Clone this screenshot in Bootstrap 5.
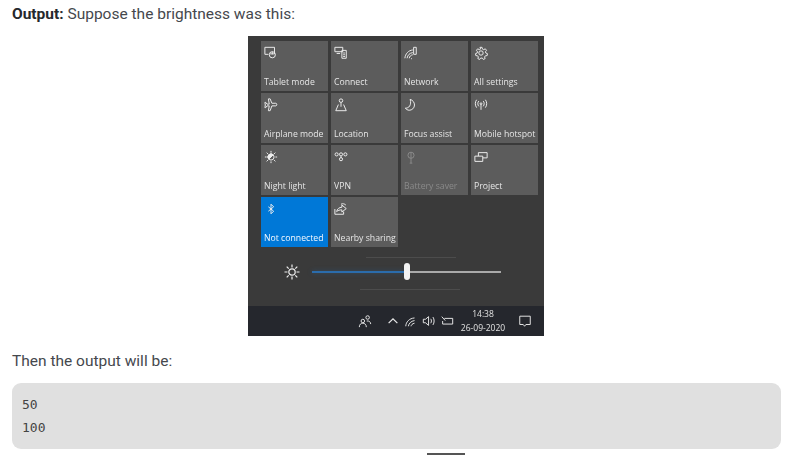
<!DOCTYPE html>
<html lang="en">
<head>
<meta charset="UTF-8">
<meta name="viewport" content="width=device-width, initial-scale=1.0">
<title>Output</title>
<link href="https://cdn.jsdelivr.net/npm/bootstrap@5.3.0/dist/css/bootstrap.min.css" rel="stylesheet">
<style>
body { font-family: Roboto, "Liberation Sans", sans-serif; font-size: 15.5px; color: #45484d; overflow: hidden; }
.page-wrap { padding: 5px 4px 0 12px; }
.out-text { line-height: 18px; margin: 0; }
.out-text b { color: #25282c; }
.shot { width: 296px; height: 300px; margin: 13px 0 16px 236px; background: #3a3a3a; filter: blur(.35px); }
.tile-grid { display: grid; grid-template-columns: repeat(4, 67px); grid-auto-rows: 50px; gap: 2px 3px; padding: 5px 0 0 13px; height: 211px; }
.tile { background: #5c5c5c; color: #e6e6e6; font-family: "Open Sans", sans-serif; font-size: 8.7px; line-height: 12px; padding: 5px 0 3px 3px; white-space: nowrap; }
.tile svg { width: 14px; height: 14px; fill: none; stroke: #eee; stroke-width: 1.1; display: block; }
.tile.on { background: #0078d7; color: #f2f8ff; }
.tile.off { color: #8a8a8a; }
.tile.off svg { stroke: #8a8a8a; }
.bright-row { height: 59px; position: relative; padding: 0 0 10px 36px; }
.bright-row > svg { width: 16px; height: 16px; fill: none; stroke: #eee; stroke-width: 1.2; margin-right: 12px; }
.ghost { position: absolute; height: 1px; background: #4c4c4c; }
.ghost.g1 { top: 10px; left: 118px; width: 90px; }
.ghost.g2 { top: 42px; left: 112px; width: 100px; }
.bar-a { width: 92px; height: 2px; background: #2b6cab; box-shadow: 0 0 5px rgba(43,108,171,.45); }
.bar-b { width: 91px; height: 2px; background: #a9a9a9; }
.knob { width: 6px; height: 17px; background: #f3f3f3; border-radius: 3px; }
.task { height: 30px; background: #25272d; color: #e2e2e2; padding-right: 12px; font-family: "Open Sans", sans-serif; font-size: 8.5px; line-height: 14px; }
.task svg { width: 14px; height: 14px; fill: none; stroke: #e8e8e8; stroke-width: 1.1; flex: none; }
.task svg.people { margin-right: 14px; }
.clock { width: 46px; margin: 0 12px 0 6px; }
.code-box { background: #e0e0e0; border-radius: 9px; height: 66px; margin: 13px 0 4px; padding: 10px; font-family: "DejaVu Sans Mono", monospace; font-size: 13px; line-height: 23px; color: #444; }
.code-box div { white-space: pre; }
.next-rule { width: 38px; height: 2px; background: #555; margin-left: 415px; }
</style>
</head>
<body>
<div class="page-wrap">
    <p class="out-text"><b>Output:</b> Suppose the brightness was this:</p>

    <div class="shot">
        <div class="tile-grid">
            <div class="tile d-flex flex-column justify-content-between">
                <svg viewBox="0 0 16 16"><path d="M1 1.5h11v7.5H7M1 1.500v8h4"/><circle cx="9.500" cy="10" r="3.500"/><path d="M9.500 6.500v3"/></svg>
                <span>Tablet mode</span>
            </div>
            <div class="tile d-flex flex-column justify-content-between">
                <svg viewBox="0 0 16 16"><path d="M1 1.500h9v5H1zM3 8.500h4"/><path d="M9 5h5v9H9zM10.500 8h2M10.500 10h2M10.500 12h2"/></svg>
                <span>Connect</span>
            </div>
            <div class="tile d-flex flex-column justify-content-between">
                <svg viewBox="0 0 16 16"><path d="M1 14c.5-5 4-9 9-9.500M3.500 14c.5-3.500 3-6 6.500-6.500M6 14c.3-2 1.500-3.500 4-4M8 14.500h1"/><path d="M11 1.500h3v8h-3z"/></svg>
                <span>Network</span>
            </div>
            <div class="tile d-flex flex-column justify-content-between">
                <svg viewBox="0 0 16 16"><circle cx="8" cy="8" r="2.500"/><path d="M6.800 1.500h2.400l.4 2 1.500.7 1.800-1 1.400 1.700-1.200 1.700.4 1.400 1.900.8-.4 2.200-2 .2-.9 1.300.6 1.900-2 1-1.200-1.600H7.600l-1.200 1.600-2-1 .6-1.900-.9-1.300-2-.2-.4-2.200 1.900-.8.4-1.400L2.800 4.900l1.400-1.700 1.800 1 1.500-.7z"/></svg>
                <span>All settings</span>
            </div>

            <div class="tile d-flex flex-column justify-content-between">
                <svg viewBox="0 0 16 16"><path d="M5 1h2l2 5h4.500c1.500 0 1.500 3 0 3H9l-2 5.500H5l1-5.500H3.500L2 11H1l.5-3L1 5h1l1.500 2H6z"/></svg>
                <span>Airplane mode</span>
            </div>
            <div class="tile d-flex flex-column justify-content-between">
                <svg viewBox="0 0 16 16"><circle cx="8" cy="3" r="2"/><path d="M8 5v5M5 7.500 2 14.500h12l-3-7"/></svg>
                <span>Location</span>
            </div>
            <div class="tile d-flex flex-column justify-content-between">
                <svg viewBox="0 0 16 16"><path d="M7 1.500c3 1 5 3.500 5 6.500 0 3.500-3 6-6 6-1.800 0-3.500-1-4.500-2.500 4 .5 7.500-3.500 5.500-10z"/></svg>
                <span>Focus assist</span>
            </div>
            <div class="tile d-flex flex-column justify-content-between">
                <svg viewBox="0 0 16 16"><circle cx="8" cy="6.500" r="1"/><path d="M8 7.500v6M5.500 3.500c-1.500 1.500-1.500 4.500 0 6M10.500 3.500c1.500 1.500 1.500 4.500 0 6M3 2c-2 2.500-2 6.500 0 9M13 2c2 2.500 2 6.500 0 9"/></svg>
                <span>Mobile hotspot</span>
            </div>

            <div class="tile d-flex flex-column justify-content-between">
                <svg viewBox="0 0 16 16"><circle cx="8" cy="8" r="3.500"/><path d="M5.500 10.500a3.500 3.500 0 0 1 5-5z" fill="#eee"/><path d="M8 1v2M8 13v2M1 8h2M13 8h2M3 3l1.500 1.500M11.500 11.500 13 13M3 13l1.500-1.500M11.500 4.500 13 3"/></svg>
                <span>Night light</span>
            </div>
            <div class="tile d-flex flex-column justify-content-between">
                <svg viewBox="0 0 16 16"><circle cx="3" cy="5" r="1.800"/><circle cx="8" cy="5" r="1.800"/><circle cx="13" cy="5" r="1.800"/><circle cx="8" cy="10.500" r="1.800"/><path d="M8 7v2"/></svg>
                <span>VPN</span>
            </div>
            <div class="tile off d-flex flex-column justify-content-between">
                <svg viewBox="0 0 16 16"><circle cx="8" cy="6" r="3.500"/><path d="M8 2.500V15M6.500 15h3"/></svg>
                <span>Battery saver</span>
            </div>
            <div class="tile d-flex flex-column justify-content-between">
                <svg viewBox="0 0 16 16"><path d="M1 7h9v6H1zM5 7V3h10v6h-5"/></svg>
                <span>Project</span>
            </div>

            <div class="tile on d-flex flex-column justify-content-between">
                <svg viewBox="0 0 16 16"><path d="M5 5.500 11 10.500 8 13.500V2.500l3 3L5 10.500"/></svg>
                <span>Not connected</span>
            </div>
            <div class="tile d-flex flex-column justify-content-between">
                <svg viewBox="0 0 16 16"><path d="M1 8v6h10v-3M3 11c.5-3 3-5 6-5V3.500l5 4-5 4V9c-2.500 0-4.500.5-6 2z"/><path d="M8 2.500c2-1 4-.5 5.500 1"/></svg>
                <span>Nearby sharing</span>
            </div>
        </div>

        <div class="bright-row d-flex align-items-center">
            <span class="ghost g1"></span>
            <span class="ghost g2"></span>
            <svg viewBox="0 0 16 16"><circle cx="8" cy="8" r="3.200"/><path d="M8 .5v3M8 12.500v3M.5 8h3M12.500 8h3M2.700 2.700l2 2M11.300 11.300l2 2M2.700 13.300l2-2M11.300 4.700l2-2"/></svg>
            <div class="bar-a"></div>
            <div class="knob"></div>
            <div class="bar-b"></div>
        </div>

        <div class="task d-flex align-items-center justify-content-end text-center">
            <svg class="people" viewBox="0 0 16 16"><circle cx="5.500" cy="8" r="2"/><path d="M1.500 15c0-3 1.800-4.500 4-4.500s4 1.500 4 4.500"/><circle cx="11" cy="4" r="2"/><path d="M10 8c2.500-.5 4.500 1 4.500 3.500"/></svg>
            <svg class="me-1" viewBox="0 0 16 16"><path d="M3 10.500 8 5.500l5 5" stroke-width="1.400"/></svg>
            <svg class="me-1" viewBox="0 0 16 16"><path d="M2 14c.3-5 4-9 10-9.500M5 14c.3-3 3-6 7-6.500M8 14c.2-1.500 1.500-3 4-3.500"/></svg>
            <svg class="me-1" viewBox="0 0 16 16"><path d="M1.500 6h2.500l3.500-3v10L4 10H1.500zM10 5.500c1 1.500 1 3.500 0 5M12.500 3.500c1.800 2.500 1.800 6.500 0 9"/></svg>
            <svg viewBox="0 0 16 16"><path d="M5 5h9.500v6.500H3V8"/><path d="M2 3 6 7.500"/></svg>
            <div class="clock"><div>14:38</div><div>26-09-2020</div></div>
            <svg viewBox="0 0 16 16"><path d="M2 2.500h12v9.500H9l-1.500 2L6 12H2z"/></svg>
        </div>
    </div>

    <p class="out-text">Then the output will be:</p>

    <div class="code-box">
        <div>50</div>
        <div>100</div>
    </div>
    <div class="next-rule"></div>
</div>
<script src="https://cdn.jsdelivr.net/npm/bootstrap@5.3.0/dist/js/bootstrap.bundle.min.js"></script>
</body>
</html>
